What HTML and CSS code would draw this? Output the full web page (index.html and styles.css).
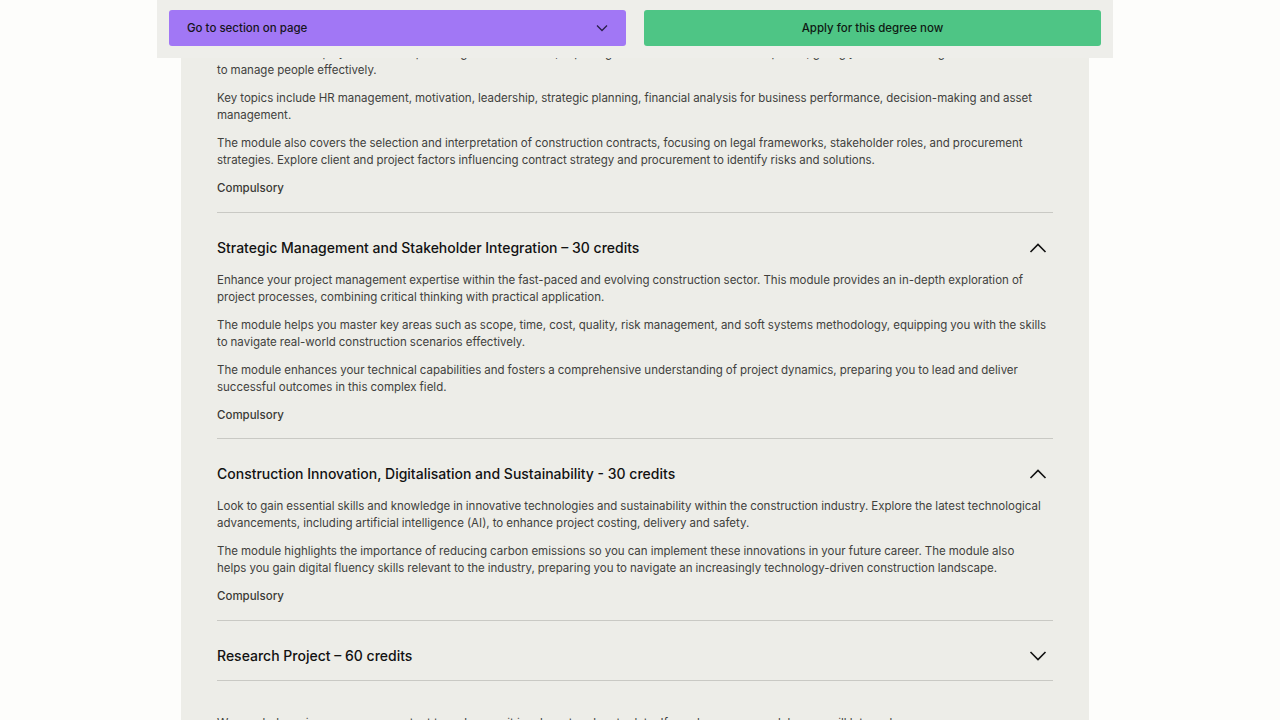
FILE: index.html
```html
<!DOCTYPE html>
<html lang="en">
<head>
<meta charset="utf-8">
<title>Course modules</title>
<link rel="stylesheet" href="styles.css">
</head>
<body>
<div class="sticky">
  <button class="btn btn-section">
    <span>Go to section on page</span>
    <svg class="btn-chev" width="12" height="8" viewBox="0 0 12 8"><path d="M1 1.5 L6 6.5 L11 1.5" fill="none" stroke="#2a1f4a" stroke-width="1.3"/></svg>
  </button>
  <button class="btn btn-apply">Apply for this degree now</button>
</div>

<main class="panel">
  <section class="module open first">
    <div class="module-body">
      <p>This module develops your leadership and organisational skills, exploring how teams and businesses operate, giving you the knowledge<br>to manage people effectively.</p>
      <p>Key topics include HR management, motivation, leadership, strategic planning, financial analysis for business performance, decision-making and asset management.</p>
      <p>The module also covers the selection and interpretation of construction contracts, focusing on legal frameworks, stakeholder roles, and procurement strategies. Explore client and project factors influencing contract strategy and procurement to identify risks and solutions.</p>
      <p class="tag">Compulsory</p>
    </div>
  </section>

  <section class="module open">
    <div class="module-head">
      <h3>Strategic Management and Stakeholder Integration – 30 credits</h3>
      <svg class="chev" width="18" height="10" viewBox="0 0 18 10"><path d="M1.5 9 L9 1.5 L16.5 9" fill="none" stroke="#111" stroke-width="1.6"/></svg>
    </div>
    <div class="module-body">
      <p>Enhance your project management expertise within the fast-paced and evolving construction sector. This module provides an in-depth exploration of project processes, combining critical thinking with practical application.</p>
      <p>The module helps you master key areas such as scope, time, cost, quality, risk management, and soft systems methodology, equipping you with the skills to navigate real-world construction scenarios effectively.</p>
      <p>The module enhances your technical capabilities and fosters a comprehensive understanding of project dynamics, preparing you to lead and deliver successful outcomes in this complex field.</p>
      <p class="tag">Compulsory</p>
    </div>
  </section>

  <section class="module open">
    <div class="module-head">
      <h3>Construction Innovation, Digitalisation and Sustainability - 30 credits</h3>
      <svg class="chev" width="18" height="10" viewBox="0 0 18 10"><path d="M1.5 9 L9 1.5 L16.5 9" fill="none" stroke="#111" stroke-width="1.6"/></svg>
    </div>
    <div class="module-body">
      <p>Look to gain essential skills and knowledge in innovative technologies and sustainability within the construction industry. Explore the latest technological advancements, including artificial intelligence (AI), to enhance project costing, delivery and safety.</p>
      <p>The module highlights the importance of reducing carbon emissions so you can implement these innovations in your future career. The module also<br>helps you gain digital fluency skills relevant to the industry, preparing you to navigate an increasingly technology-driven construction landscape.</p>
      <p class="tag">Compulsory</p>
    </div>
  </section>

  <section class="module">
    <div class="module-head">
      <h3>Research Project – 60 credits</h3>
      <svg class="chev" width="18" height="10" viewBox="0 0 18 10"><path d="M1.5 1 L9 8.5 L16.5 1" fill="none" stroke="#111" stroke-width="1.6"/></svg>
    </div>
  </section>

  <p class="note">We regularly review our course content to make sure it is relevant and up to date. If we change any modules, we will let you know.</p>
</main>
</body>
</html>
```

FILE: styles.css
```css
* { box-sizing: border-box; }

html, body {
  margin: 0;
  padding: 0;
  background: #fdfdfb;
  overflow: hidden;
  height: 720px;
}

body {
  font-family: Inter, "Liberation Sans", Arial, sans-serif;
  color: #41413d;
}

.sticky {
  position: fixed;
  top: 0;
  left: 157px;
  width: 956px;
  height: 58px;
  background: #eeeeea;
  display: flex;
  gap: 18px;
  padding: 10px 12px 12px;
  z-index: 10;
}

.btn {
  flex: 1 1 0;
  width: 0;
  height: 36px;
  border: none;
  border-radius: 3px;
  padding: 0 18px;
  font-family: Inter, "Liberation Sans", Arial, sans-serif;
  font-size: 11.5px;
  font-weight: 500;
  color: #16141c;
  display: flex;
  align-items: center;
}

.btn-section {
  background: #a177f5;
  justify-content: space-between;
}

.btn-apply {
  background: #4ec585;
  justify-content: center;
  color: #0f1a13;
}

.panel {
  width: 908px;
  margin: 0 0 0 181px;
  background: #ededE8;
  padding: 45px 36px 40px;
  min-height: 760px;
}

.module {
  border-bottom: 1px solid #c9c9c4;
}

.module-head {
  display: flex;
  align-items: center;
  justify-content: space-between;
  padding: 25px 6px 14px 0;
}

.module-head h3 {
  margin: 0;
  font-size: 14px;
  line-height: 20px;
  font-weight: 500;
  color: #121212;
}

.module-body {
  padding-bottom: 14.5px;
}

.module-body p {
  margin: 0 0 11px;
  font-size: 11.5px;
  line-height: 17px;
  word-spacing: -0.2px;
}

.module-body p.tag {
  margin: 0;
  color: #3a3a36;
  font-weight: 500;
}

.note {
  margin: 34px 0 0;
  font-size: 11.5px;
  line-height: 17px;
}
```
